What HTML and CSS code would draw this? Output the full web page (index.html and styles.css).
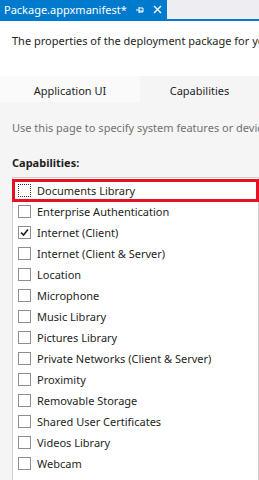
FILE: index.html
```html
<!DOCTYPE html>
<html lang="en">
<head>
    <meta charset="UTF-8">
    <title>Package.appxmanifest</title>
    <link rel="stylesheet" href="styles.css">
</head>
<body>
    <div class="doc-bar">
        <div class="doc-tab">
            <span class="doc-name">Package.appxmanifest*</span>
            <svg class="pin" width="10" height="10" viewBox="0 0 10 10">
                <path d="M1 5H4M4 2V8M4 3H8V7H4M4 6H8" fill="none" stroke="#fff" stroke-width="1"/>
            </svg>
            <svg class="close" width="9" height="9" viewBox="0 0 9 9">
                <path d="M1 1L8 8M8 1L1 8" stroke="#fff" stroke-width="1.4"/>
            </svg>
        </div>
    </div>

    <div class="intro">The properties of the deployment package for your app</div>

    <div class="tabs">
        <div class="tab">Application UI</div>
        <div class="tab active">Capabilities</div>
    </div>

    <div class="panel">
        <div class="hint">Use this page to specify system features or devices that your app can use.</div>
        <div class="label">Capabilities:</div>
        <ul class="cap-list">
            <li class="item focused"><span class="box dotted"></span>Documents Library</li>
            <li class="item"><span class="box"></span>Enterprise Authentication</li>
            <li class="item"><span class="box checked">
                <svg width="11" height="11" viewBox="0 0 11 11"><path d="M2 5.5L4.5 8L9 2.5" fill="none" stroke="#1e1e1e" stroke-width="1.6"/></svg>
            </span>Internet (Client)</li>
            <li class="item"><span class="box"></span>Internet (Client &amp; Server)</li>
            <li class="item"><span class="box"></span>Location</li>
            <li class="item"><span class="box"></span>Microphone</li>
            <li class="item"><span class="box"></span>Music Library</li>
            <li class="item"><span class="box"></span>Pictures Library</li>
            <li class="item"><span class="box"></span>Private Networks (Client &amp; Server)</li>
            <li class="item"><span class="box"></span>Proximity</li>
            <li class="item"><span class="box"></span>Removable Storage</li>
            <li class="item"><span class="box"></span>Shared User Certificates</li>
            <li class="item"><span class="box"></span>Videos Library</li>
            <li class="item"><span class="box"></span>Webcam</li>
        </ul>
    </div>
</body>
</html>
```

FILE: styles.css
```css
html,
body {
    margin: 0;
}

body {
    width: 259px;
    height: 480px;
    overflow: hidden;
    background: #fff;
    font-family: "Noto Sans", "Open Sans", sans-serif;
    font-size: 11px;
    color: #1e1e1e;
}

.doc-bar {
    height: 19px;
    background: #eeeef2;
    border-bottom: 2px solid #007acc;
}

.doc-tab {
    width: 167px;
    height: 19px;
    background: #007acc;
    color: #fff;
    display: flex;
    align-items: center;
    padding-left: 4px;
    box-sizing: border-box;
}

.doc-name {
    font-size: 11px;
    flex: 1;
    white-space: nowrap;
}

.pin {
    margin-right: 8px;
}

.close {
    margin-right: 5px;
}

.intro {
    height: 55px;
    box-sizing: border-box;
    padding: 12px 0 0 12px;
    line-height: 16px;
    white-space: nowrap;
    overflow: hidden;
}

.tabs {
    display: flex;
    height: 26px;
}

.tab {
    flex: 0 0 140px;
    background: #fafafa;
    display: flex;
    align-items: center;
    justify-content: center;
    padding-top: 2px;
    box-sizing: border-box;
}

.tab.active {
    flex: 1;
    background: #f5f5f5;
}

.panel {
    background: #f5f5f5;
    padding: 18px 0 0 12px;
    height: 378px;
    box-sizing: border-box;
    overflow: hidden;
}

.hint {
    color: #717171;
    line-height: 16px;
    white-space: nowrap;
    overflow: hidden;
}

.label {
    font-weight: bold;
    line-height: 16px;
    margin-top: 19px;
}

.cap-list {
    list-style: none;
    margin: 6px 0 0;
    padding: 2px 0 0;
    background: #fff;
    border: 1px solid #cfcfcf;
    border-bottom: none;
    height: 320px;
}

.item {
    height: 21px;
    display: flex;
    align-items: center;
    padding-left: 5px;
    white-space: nowrap;
}

.item.focused {
    outline: 3px solid #e81123;
    outline-offset: -2px;
}

.box {
    width: 13px;
    height: 13px;
    border: 1px solid #8e8e8e;
    box-sizing: border-box;
    background: #fff;
    margin-right: 6px;
    display: flex;
    align-items: center;
    justify-content: center;
    flex: none;
}

.box.dotted {
    border: 1px dotted #333;
}
```
